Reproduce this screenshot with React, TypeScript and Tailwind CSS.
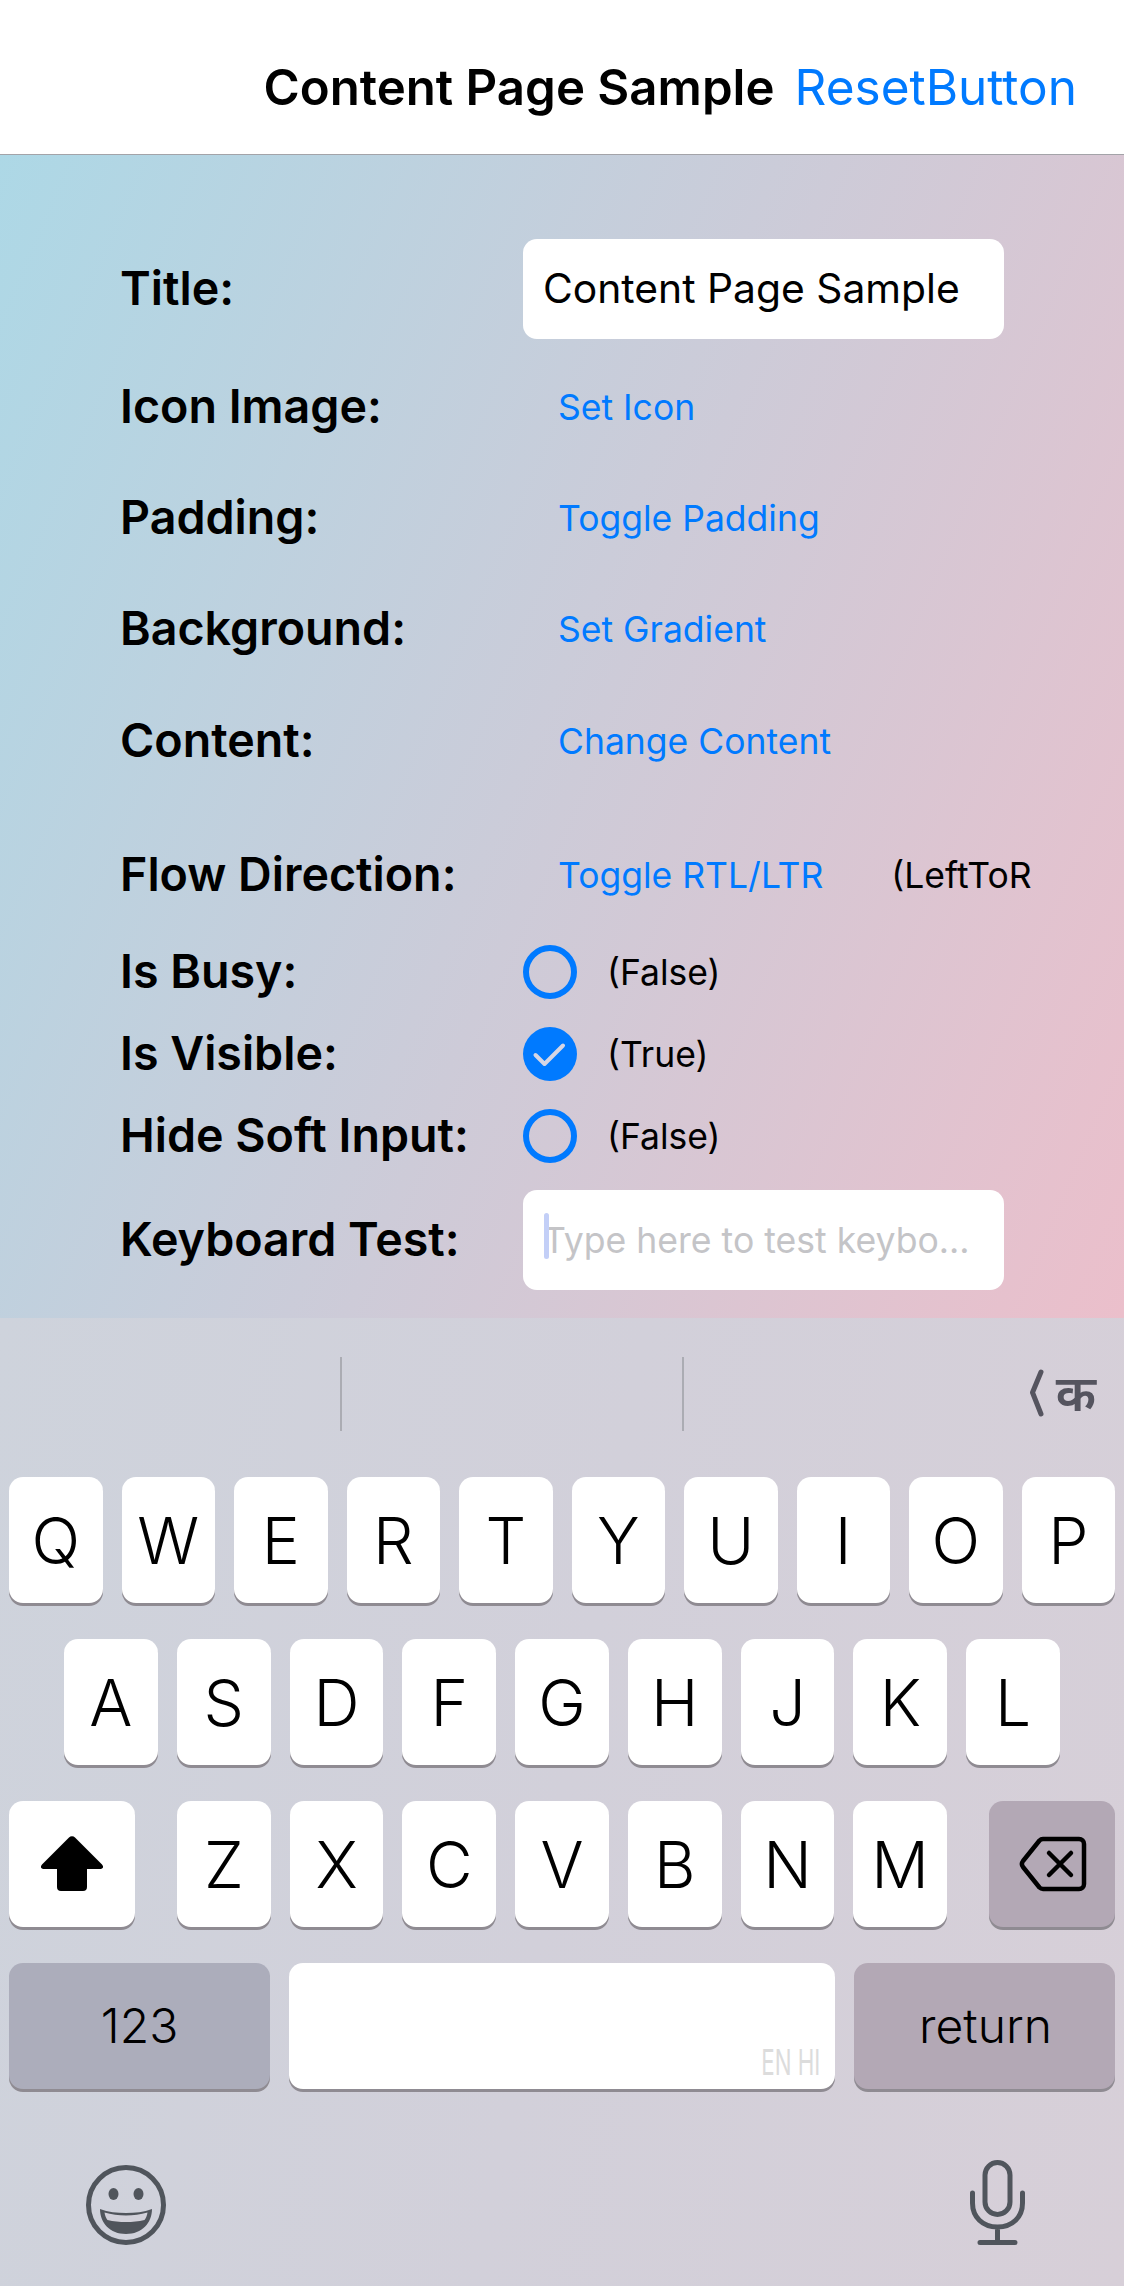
const font = "font-['Inter','Noto_Sans',sans-serif]";

const rowOne = ["Q", "W", "E", "R", "T", "Y", "U", "I", "O", "P"];
const rowTwo = ["A", "S", "D", "F", "G", "H", "J", "K", "L"];
const rowThree = ["Z", "X", "C", "V", "B", "N", "M"];

const Label = ({ children }: { children: string }) => (
  <div className="w-[403px] shrink-0 text-[46.6px] font-semibold text-black whitespace-nowrap">{children}</div>
);

const LinkButton = ({ children }: { children: string }) => (
  <div className="pl-[35px] pt-[2px] text-[35.5px] text-[#007aff] whitespace-nowrap">{children}</div>
);

const CheckRow = ({ label, value, checked }: { label: string; value: string; checked?: boolean }) => (
  <div className="flex h-[64px] items-center">
    <Label>{label}</Label>
    {checked ? (
      <svg width="54" height="54" viewBox="0 0 54 54" className="shrink-0">
        <circle cx="27" cy="27" r="27" fill="#007aff" />
        <path d="M12.500 28 21.500 37 40 18.500" fill="none" stroke="#d6d6e4" strokeWidth="4" strokeLinecap="round" strokeLinejoin="round" />
      </svg>
    ) : (
      <div className="h-[54px] w-[54px] shrink-0 rounded-full border-[6px] border-[#007aff]" />
    )}
    <div className="ml-[30px] pt-[2px] text-[35.5px] text-black">{value}</div>
  </div>
);

const Key = ({ children }: { children: string }) => (
  <div className="flex h-[126px] flex-1 items-center justify-center rounded-[14px] bg-white pt-[2px] text-[64px] font-[350] text-black shadow-[0_3px_0_#8f8b92]">
    {children}
  </div>
);

export default function App() {
  return (
    <div className={`${font} flex h-[2286px] w-[1124px] flex-col overflow-hidden bg-white`}>
      {/* nav bar */}
      <header className="flex h-[155px] shrink-0 items-end justify-end gap-[20px] border-b border-[#a3a3a8] bg-white pb-[36px] pr-[47px]">
        <span className="text-[49.2px] font-semibold leading-[62px] text-black">Content Page Sample</span>
        <span className="text-[49.5px] leading-[62px] text-[#007aff]">ResetButton</span>
      </header>

      {/* page content */}
      <main className="h-[1163px] shrink-0 bg-[linear-gradient(113deg,#add8e6,#ebbfcb)] pl-[120px] pt-[84px]">
        <div className="flex h-[100px] items-center">
          <Label>Title:</Label>
          <div className="flex h-[100px] w-[481px] items-center rounded-[14px] bg-white pl-[20px] text-[40.8px] text-black">
            Content Page Sample
          </div>
        </div>
        <div className="mt-[12px] flex h-[112px] items-center">
          <Label>Icon Image:</Label>
          <LinkButton>Set Icon</LinkButton>
        </div>
        <div className="flex h-[110px] items-center">
          <Label>Padding:</Label>
          <LinkButton>Toggle Padding</LinkButton>
        </div>
        <div className="flex h-[112px] items-center">
          <Label>Background:</Label>
          <LinkButton>Set Gradient</LinkButton>
        </div>
        <div className="flex h-[112px] items-center">
          <Label>Content:</Label>
          <LinkButton>Change Content</LinkButton>
        </div>
        <div className="mt-[38px] flex h-[80px] items-center">
          <Label>Flow Direction:</Label>
          <LinkButton>Toggle RTL/LTR</LinkButton>
          <div className="ml-[68px] pt-[2px] text-[35.5px] text-black whitespace-nowrap">(LeftToR</div>
        </div>
        <div className="mt-[25px] flex flex-col gap-[18px]">
          <CheckRow label="Is Busy:" value="(False)" />
          <CheckRow label="Is Visible:" value="(True)" checked />
          <CheckRow label="Hide Soft Input:" value="(False)" />
        </div>
        <div className="mt-[22px] flex h-[100px] items-center">
          <Label>Keyboard Test:</Label>
          <div className="relative flex h-[100px] w-[481px] items-center rounded-[14px] bg-white pl-[20px] pt-[2px] text-[35.6px] text-[#c4c4c7] whitespace-nowrap">
            <span className="absolute left-[21px] top-[23px] h-[46px] w-[5px] rounded-full bg-[#c3cff7]" />
            Type here to test keybo...
          </div>
        </div>
      </main>

      {/* keyboard */}
      <section className="flex min-h-0 flex-1 flex-col bg-[linear-gradient(100deg,#ced3dc,#d2d0da_50%,#d7cfd8)]">
        <div className="relative flex h-[159px] shrink-0 items-center justify-end pb-[10px] pr-[28px]">
          <div className="absolute left-[340px] top-[39px] h-[74px] w-[2px] bg-[#abacb3]" />
          <div className="absolute left-[682px] top-[39px] h-[74px] w-[2px] bg-[#abacb3]" />
          <div className="flex items-center gap-[12px] text-[#55545f]">
            <svg width="15" height="48" viewBox="0 0 15 48" fill="none" stroke="currentColor" strokeWidth="5" strokeLinecap="round" strokeLinejoin="round">
              <path d="M12 3 3.500 23.500 12 45" />
            </svg>
            <span className="text-[50px] font-semibold leading-[48px]">क</span>
          </div>
        </div>
        <div className="mt-[0px] flex flex-col gap-[36px] px-[9px]">
          <div className="flex gap-[19px]">
            {rowOne.map((k) => (
              <Key key={k}>{k}</Key>
            ))}
          </div>
          <div className="flex gap-[19px] px-[55px]">
            {rowTwo.map((k) => (
              <Key key={k}>{k}</Key>
            ))}
          </div>
          <div className="flex justify-between">
            <div className="flex h-[126px] w-[126px] items-center justify-center rounded-[14px] bg-white shadow-[0_3px_0_#8f8b92]">
              <svg width="64" height="56" viewBox="0 0 64 56" fill="#000">
                <path d="M29 1.500a4 4 0 0 1 6 0l27 27c2 2 1 4.500-1.500 4.500H47V51a4 4 0 0 1-4 4H21a4 4 0 0 1-4-4V33H3.500C1 33 0 30.500 2 28.500Z" />
              </svg>
            </div>
            <div className="flex w-[770px] gap-[19px]">
              {rowThree.map((k) => (
                <Key key={k}>{k}</Key>
              ))}
            </div>
            <div className="flex h-[126px] w-[126px] items-center justify-center rounded-[14px] bg-[#b3a8b5] pl-[2px] shadow-[0_3px_0_#8f8b92]">
              <svg width="68" height="56" viewBox="0 0 68 56" fill="none" stroke="#000" strokeWidth="4.500" strokeLinecap="round" strokeLinejoin="round">
                <path d="M24 3h36a5 5 0 0 1 5 5v40a5 5 0 0 1-5 5H24a5 5 0 0 1-3.500-1.500L4 31a5 5 0 0 1 0-6L20.500 4.500A5 5 0 0 1 24 3Z" />
                <path d="m30 17 22 22M52 17 30 39" />
              </svg>
            </div>
          </div>
          <div className="flex gap-[19px]">
            <div className="flex h-[126px] w-[261px] items-center justify-center rounded-[14px] bg-[#acadbb] text-[48px] font-[350] text-black shadow-[0_3px_0_#8f8b92]">
              123
            </div>
            <div className="flex h-[126px] flex-1 items-end justify-end overflow-hidden rounded-[14px] bg-white pb-[9px] pr-[15px] shadow-[0_3px_0_#8f8b92]">
              <span className="origin-right scale-x-[0.62] text-[36px] leading-[36px] text-[#dcdcdc] whitespace-nowrap">EN HI</span>
            </div>
            <div className="flex h-[126px] w-[261px] items-center justify-center rounded-[14px] bg-[#b3a8b5] pl-[2px] text-[48px] font-[350] text-black shadow-[0_3px_0_#8f8b92]">
              return
            </div>
          </div>
        </div>
        <div className="mt-[71px] flex items-end justify-between pl-[86px] pr-[99px]">
          <svg width="80" height="80" viewBox="0 0 80 80">
            <circle cx="40" cy="40" r="37.500" fill="none" stroke="#50555c" strokeWidth="5" />
            <ellipse cx="27.500" cy="29" rx="5" ry="6" fill="#50555c" />
            <ellipse cx="52.500" cy="29" rx="5" ry="6" fill="#50555c" />
            <path d="M14 44c8 3 17 4 26 4s18-1 26-4c0 14-10 25-26 25S14 58 14 44Z" fill="#50555c" />
            <path d="M18.500 47.500c7 2 14 3 21.500 3s14.500-1 21.500-3c-.5 3-1.500 5.500-3 7.500-6 1.500-12 2-18.500 2s-12.500-.5-18.500-2c-1.500-2-2.500-4.500-3-7.500Z" fill="#d2d1da" />
          </svg>
          <svg width="55" height="85" viewBox="0 0 55 85" fill="none" stroke="#50555c" strokeWidth="5" strokeLinecap="round">
            <rect x="15" y="2.500" width="25" height="52" rx="12.500" />
            <path d="M2.500 33v10c0 14 10 24 25 24s25-10 25-24V33M27.500 67v15M10 82.500h35" />
          </svg>
        </div>
      </section>
    </div>
  );
}
